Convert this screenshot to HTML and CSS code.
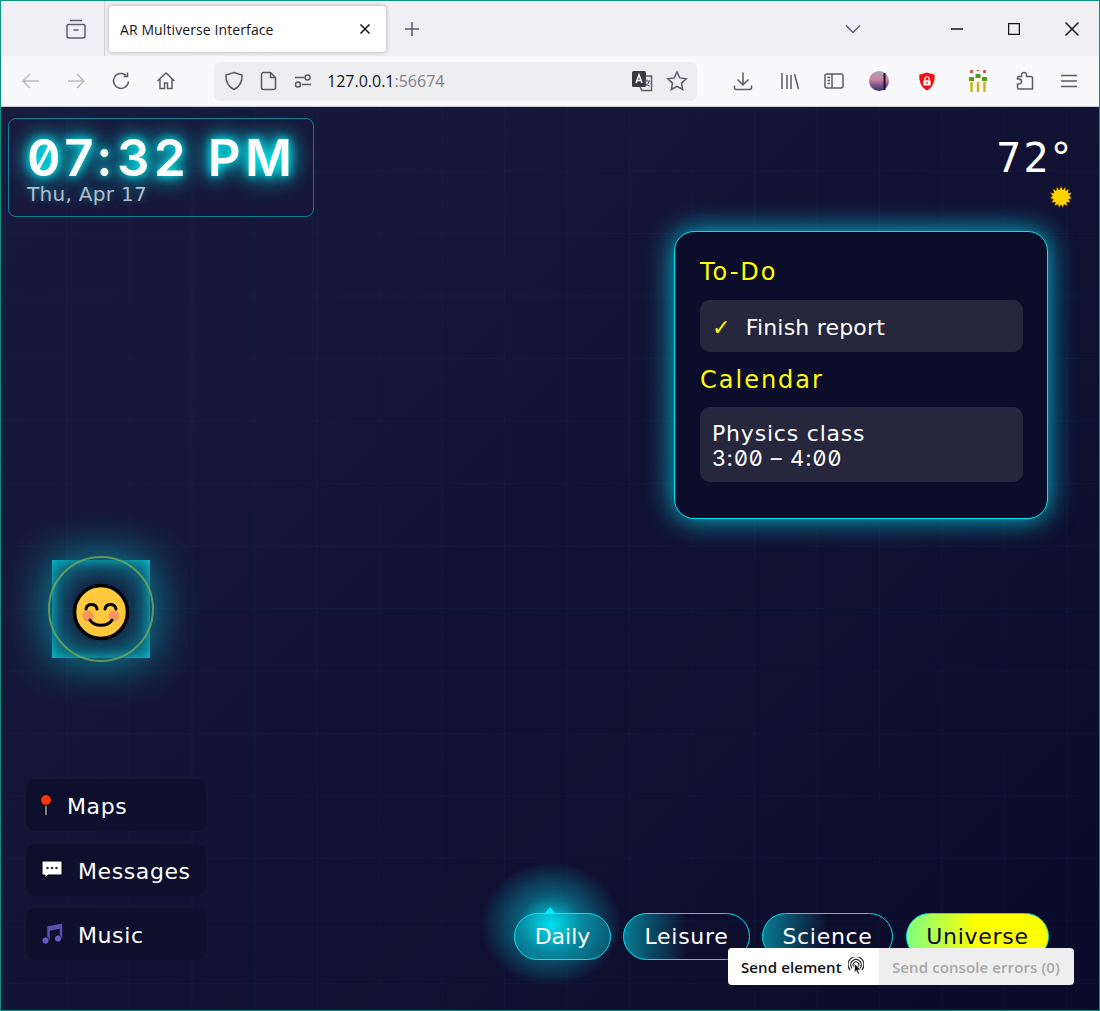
FILE: index.html
```html
<!DOCTYPE html>
<html lang="en">
<head>
    <meta charset="UTF-8">
    <title>AR Multiverse Interface</title>
    <link rel="stylesheet" href="styles.css">
</head>
<body>
<div class="window">
    <div class="tabbar">
        <div class="tab-left">
            <svg class="ico" width="22" height="22" viewBox="0 0 22 22"><path d="M5 2.500h12M3.500 6.500h15a1.500 1.500 0 0 1 1.500 1.500v10a2 2 0 0 1-2 2h-14a2 2 0 0 1-2-2v-10a1.500 1.500 0 0 1 1.500-1.500zM8.500 12h5"/></svg>
        </div>
        <div class="tab">
            <span>AR Multiverse Interface</span>
            <svg class="ico dark" width="12" height="12" viewBox="0 0 12 12"><path d="M1.500 1.500l9 9M10.500 1.500l-9 9"/></svg>
        </div>
        <svg class="ico plus" width="16" height="16" viewBox="0 0 16 16"><path d="M8 1v14M1 8h14"/></svg>
        <svg class="ico chevron" width="16" height="10" viewBox="0 0 16 10"><path d="M1 1.500l7 7 7-7"/></svg>
        <div class="winbtns">
            <svg class="ico dark" width="12" height="12" viewBox="0 0 12 12"><path d="M0 6h12"/></svg>
            <svg class="ico dark" width="12" height="12" viewBox="0 0 12 12"><path d="M.5.500h11v11h-11z"/></svg>
            <svg class="ico dark" width="14" height="14" viewBox="0 0 14 14"><path d="M.5.500l13 13M13.500.500l-13 13"/></svg>
        </div>
    </div>

    <div class="toolbar">
        <div class="nav">
            <svg class="ico faded" width="20" height="20" viewBox="0 0 20 20"><path d="M18 10H2M9 3l-7 7 7 7"/></svg>
            <svg class="ico faded" width="20" height="20" viewBox="0 0 20 20"><path d="M2 10h16M11 3l7 7-7 7"/></svg>
            <svg class="ico" width="20" height="20" viewBox="0 0 20 20"><path d="M17.500 10.500a7.500 7.500 0 1 1-2.500-6.200M16.500 1.500v4h-4"/></svg>
            <svg class="ico" width="20" height="20" viewBox="0 0 20 20"><path d="M1.500 10L10 2l8.500 8M4 8v9.500h4.500V12h3v5.500H16V8"/></svg>
        </div>
        <div class="urlbar">
            <svg class="ico" width="20" height="20" viewBox="0 0 20 20"><path d="M10 1.500l8 2.500c.4 6.500-2 11.500-8 14.500C4 15.500 1.600 10.500 2 4z"/></svg>
            <svg class="ico" width="18" height="20" viewBox="0 0 18 20"><path d="M3.500 1.500h7l5 5v10a2 2 0 0 1-2 2h-10a2 2 0 0 1-2-2v-13a2 2 0 0 1 2-2zM10.500 1.500v5h5"/></svg>
            <svg class="ico" width="18" height="16" viewBox="0 0 18 16"><circle cx="13.500" cy="4.500" r="2.500"/><circle cx="4" cy="11.500" r="2.500"/><path d="M1 4.500h9M8 11.500h9"/></svg>
            <div class="url">127.0.0.1<span>:56674</span></div>
            <svg class="translate" width="22" height="22" viewBox="0 0 22 22"><rect x="1" y="1" width="14" height="16" rx="1.500" fill="#3a3a44"/><path d="M5 13l3-8 3 8M6 10.500h4" fill="none" stroke="#fff" stroke-width="1.500"/><path d="M15 6h5.500v14.500H11L9 17" fill="none" stroke="#5b5b66" stroke-width="1.500"/><path d="M13 11h6M16 9.500v1.500M18 11c-.5 3-2.500 4.500-4.500 5M14 12c.8 2 2.500 3.500 4.500 4" fill="none" stroke="#5b5b66"/></svg>
            <svg class="ico" width="22" height="22" viewBox="0 0 22 22"><path d="M11 2l2.800 5.900 6.400.8-4.700 4.400 1.200 6.400L11 16.400l-5.700 3.100 1.200-6.400-4.700-4.400 6.400-.8z"/></svg>
        </div>
        <div class="actions">
            <svg class="ico" width="20" height="20" viewBox="0 0 20 20"><path d="M10 1.500v12M4.500 8.500l5.500 5.500 5.500-5.500M1.500 14.500v2a2 2 0 0 0 2 2h13a2 2 0 0 0 2-2v-2"/></svg>
            <svg class="ico" width="20" height="20" viewBox="0 0 20 20"><path d="M2 2v16M7 4v14M11 4v14M14.500 3l4 15"/></svg>
            <svg class="ico" width="20" height="18" viewBox="0 0 20 18"><rect x="1" y="2" width="18" height="14" rx="2"/><path d="M8 2v14M3.500 5.500h2.500M3.500 8.500h2.500M3.500 11.500h2.500"/></svg>
            <svg width="20" height="20" viewBox="0 0 20 20"><defs><linearGradient id="dusk" x1="0" y1="0" x2="0" y2="1"><stop offset="0" stop-color="#a9a3b4"/><stop offset=".45" stop-color="#d07f9c"/><stop offset=".7" stop-color="#7a5592"/><stop offset="1" stop-color="#3a3560"/></linearGradient></defs><circle cx="10" cy="10" r="10" fill="url(#dusk)"/><path d="M15.500 2v17" stroke="#17131f" stroke-width="2"/></svg>
            <svg width="18" height="21" viewBox="0 0 20 22"><path d="M10 1l8.500 2.500C19 11 16.500 17.500 10 21 3.500 17.500 1 11 1.500 3.500z" fill="#ee0f0f"/><rect x="6" y="9.500" width="8" height="6" rx="1" fill="#fff"/><path d="M7.700 9.500V8a2.300 2.300 0 0 1 4.600 0v1.500" fill="none" stroke="#fff" stroke-width="1.300"/><circle cx="10" cy="12.500" r="1" fill="#ee0f0f"/></svg>
            <svg width="18" height="22" viewBox="0 0 18 22"><path d="M2.500 12v10M9 12v10M15.500 12v10" stroke="#d2b21c" stroke-width="2.500"/><path d="M2.500 0v3M9 0v1M15.500 0v3" stroke="#d9382a" stroke-width="2.500"/><path d="M0 7h5v4H0zM6.500 4h5v4h-5zM13 7h5v4h-5z" fill="#4f9e0f"/></svg>
            <svg class="ico" width="20" height="20" viewBox="0 0 20 20"><path d="M8 1.500a2.500 2.500 0 0 1 2.500 2.500v1.500H15a1.500 1.500 0 0 1 1.500 1.500v11H3a1.500 1.500 0 0 1-1.500-1.500v-3.500H3a2.500 2.500 0 0 0 0-5H1.500V7A1.500 1.500 0 0 1 3 5.500h2.500V4A2.500 2.500 0 0 1 8 1.500z"/></svg>
            <svg class="ico" width="16" height="14" viewBox="0 0 16 14"><path d="M0 1.500h16M0 7h16M0 12.500h16"/></svg>
        </div>
    </div>

    <div class="hud">
        <div class="col-left">
            <div class="clock">
                <div class="time">07:32 PM</div>
                <div class="date">Thu, Apr 17</div>
            </div>
            <div class="avatar">
                <div class="ring"></div>
                <svg class="face" width="58" height="58" viewBox="0 0 58 58">
                    <circle cx="29" cy="29" r="26.500" fill="#ffc83d" stroke="#000" stroke-width="3.500"/>
                    <circle cx="16" cy="33" r="5.500" fill="#f7965c"/>
                    <circle cx="42" cy="33" r="5.500" fill="#f7965c"/>
                    <path d="M14 26c1-6 10-6 11 0M33 26c1-6 10-6 11 0M18 37c4 7 18 7 22 0" fill="none" stroke="#000" stroke-width="3" stroke-linecap="round"/>
                </svg>
            </div>
            <div class="apps">
                <div class="app">
                    <svg width="16" height="24" viewBox="0 0 16 24"><path d="M8 12v10" stroke="#000" stroke-width="4"/><path d="M8 12v10" stroke="#9bb7c4" stroke-width="1.500"/><circle cx="8" cy="7" r="5.500" fill="#f4350f" stroke="#000"/></svg>
                    <span>Maps</span>
                </div>
                <div class="app app-wide">
                    <svg width="22" height="20" viewBox="0 0 22 20"><path d="M2 1h18a1 1 0 0 1 1 1v12a1 1 0 0 1-1 1H7l-3 3v-3H2a1 1 0 0 1-1-1V2a1 1 0 0 1 1-1z" fill="#fff" stroke="#000"/><circle cx="6.500" cy="8" r="1.300" fill="#333"/><circle cx="11" cy="8" r="1.300" fill="#333"/><circle cx="15.500" cy="8" r="1.300" fill="#333"/></svg>
                    <span>Messages</span>
                </div>
                <div class="app app-wide">
                    <svg width="22" height="22" viewBox="0 0 22 22"><path d="M7.500 17V4.500L20 2v13" fill="none" stroke="#5f4fb3" stroke-width="2.500"/><path d="M7.500 4.500L20 2v3.500L7.500 8z" fill="#5f4fb3"/><circle cx="4.500" cy="17.500" r="3.500" fill="#6a58c4" stroke="#000" stroke-width=".6"/><circle cx="17" cy="15.500" r="3.500" fill="#6a58c4" stroke="#000" stroke-width=".6"/></svg>
                    <span>Music</span>
                </div>
            </div>
        </div>

        <div class="col-right">
            <div class="weather">
                <div class="temp">72°</div>
                <svg class="sun" width="22" height="22" viewBox="-11 -11 22 22"><polygon points="0,-11 1.900,-7.100 4.200,-10.200 4.900,-6.400 8.200,-8.200 7.100,-4 11,-4.200 8.600,-1.200 10.900,1.500 7.700,2.300 9.500,5.500 5.700,5.300 6.400,9 3,7.500 2,10.800 0,7.800 -2,10.800 -3,7.500 -6.400,9 -5.700,5.300 -9.500,5.500 -7.700,2.300 -10.900,1.500 -8.600,-1.200 -11,-4.200 -7.100,-4 -8.200,-8.200 -4.900,-6.400 -4.200,-10.200 -1.900,-7.100" fill="#ffd400" stroke="#4a2c00" stroke-width=".7"/></svg>
            </div>
            <div class="panel">
                <h2>To-Do</h2>
                <div class="item item-todo"><span class="check">✓</span>Finish report</div>
                <h2>Calendar</h2>
                <div class="item item-cal">Physics class<br><span class="zeros">3:00 – 4:00</span></div>
            </div>
            <div class="pills">
                <div class="pill pill-active">Daily</div>
                <div class="pill pill-leisure">Leisure</div>
                <div class="pill pill-science">Science</div>
                <div class="pill pill-universe">Universe</div>
            </div>
        </div>

        <div class="sendbar">
            <div class="send-on">Send element
                <svg width="16" height="19" viewBox="0 0 18 20"><path d="M4.500 12a6 6 0 1 1 9 0M2.500 14a9 9 0 1 1 13 0M6.500 10a3.200 3.200 0 1 1 5 0" fill="none" stroke="#222" stroke-width="1.300"/><path d="M7.500 7l6.500 6.500-3 .3 1.800 4-1.600.7-1.800-4-2 2z" fill="#111" stroke="#fff" stroke-width=".5"/></svg>
            </div>
            <div class="send-off">Send console errors (0)</div>
        </div>
    </div>
</div>
</body>
</html>
```

FILE: styles.css
```css
* {
    box-sizing: border-box;
}
html, body {
    margin: 0;
    padding: 0;
}
.window {
    width: 1100px;
    height: 1011px;
    border: 1px solid #0a8f80;
    display: flex;
    flex-direction: column;
    overflow: hidden;
    font-family: "Open Sans", sans-serif;
}
.ico {
    fill: none;
    stroke: #5b5b66;
    stroke-width: 1.500;
    flex: none;
}
.ico.dark {
    stroke: #15141a;
}
.ico.faded {
    stroke: #b9b9bf;
}

/* browser chrome */
.tabbar {
    height: 55px;
    background: #f0f0f4;
    display: flex;
    align-items: center;
    flex: none;
}
.tab-left {
    width: 104px;
    height: 55px;
    border-right: 1px solid #cfcfd6;
    display: flex;
    align-items: center;
    justify-content: flex-end;
    padding-right: 17px;
    margin-right: 4px;
}
.tab {
    width: 277px;
    height: 46px;
    margin-top: 1px;
    background: #fff;
    border-radius: 4px;
    box-shadow: 0 0 4px rgba(0, 0, 0, 0.3);
    display: flex;
    align-items: center;
    justify-content: space-between;
    padding: 0 15px 0 11px;
    font-size: 14px;
    letter-spacing: 0.1px;
    color: #15141a;
}
.plus {
    margin-left: 18px;
}
.chevron {
    margin-left: 425px;
}
.winbtns {
    display: flex;
    align-items: center;
    gap: 45px;
    margin-left: 90px;
}
.toolbar {
    height: 51px;
    background: #f9f9fb;
    border-bottom: 1px solid #ccccd2;
    display: flex;
    align-items: center;
    flex: none;
}
.nav {
    display: flex;
    align-items: center;
    gap: 25px;
    width: 213px;
    padding-left: 20px;
}
.urlbar {
    width: 483px;
    height: 39px;
    background: #eeeef0;
    border-radius: 6px;
    display: flex;
    align-items: center;
    gap: 16px;
    padding: 0 9px 0 10px;
}
.url {
    font-size: 16px;
    color: #15141a;
    margin-left: -1px;
    flex: 1;
}
.url span {
    color: #80808a;
}
.translate {
    flex: none;
    margin-right: -3px;
}
.actions {
    display: grid;
    grid-template-columns: 47px 47px 41px 49px 47px 55px 41px 45px;
    justify-items: center;
    align-items: center;
    margin-left: 22px;
}

/* hud */
.hud {
    flex: 1;
    position: relative;
    display: flex;
    justify-content: space-between;
    background-color: #12123a;
    background-image:
        linear-gradient(rgba(0, 255, 255, 0.025) 1px, transparent 1px),
        linear-gradient(90deg, rgba(0, 255, 255, 0.025) 1px, transparent 1px),
        linear-gradient(135deg, #1a1a3e 0%, #0a0a2a 100%);
    background-size: 62.500px 62.500px, 62.500px 62.500px, 100% 100%;
    background-position: 3px 1px, 3px 1px, 0 0;
    font-family: "DejaVu Sans", sans-serif;
    color: #fff;
}
.col-left {
    padding: 11px 0 50px 7px;
    display: flex;
    flex-direction: column;
}
.clock {
    width: 306px;
    height: 99px;
    border: 1px solid rgba(0, 255, 255, 0.45);
    border-radius: 8px;
    padding: 15px 18px;
}
.time {
    font-family: "Inter", sans-serif;
    font-feature-settings: "zero";
    font-size: 51px;
    line-height: 48px;
    font-weight: 600;
    letter-spacing: 4.500px;
    white-space: nowrap;
    text-shadow: 0 0 10px #00ffff, 0 0 20px #00ffff, 0 0 30px rgba(0, 255, 255, 0.5);
}
.date {
    font-size: 20px;
    line-height: 24px;
    letter-spacing: 0.3px;
    color: #b3bdc9;
    text-shadow: 0 0 8px rgba(0, 255, 255, 0.4);
}
.avatar {
    width: 98px;
    height: 98px;
    margin: 343px 0 0 44px;
    position: relative;
    display: flex;
    align-items: center;
    justify-content: center;
    box-shadow: 0 0 50px rgba(0, 255, 255, 0.6), inset 0 0 40px rgba(0, 255, 255, 0.7), inset 0 0 12px rgba(0, 255, 255, 0.5);
}
.ring {
    position: absolute;
    left: -4px;
    top: -4px;
    width: 106px;
    height: 106px;
    border: 2px solid rgba(125, 170, 85, 0.75);
    border-radius: 50%;
}
.face {
    margin-top: 6px;
}
.apps {
    margin: 121px 0 0 18px;
    display: flex;
    flex-direction: column;
    gap: 12.500px;
}
.app {
    width: 180px;
    height: 52px;
    background: #0e0e2d;
    border-radius: 10px;
    display: flex;
    align-items: center;
    gap: 13px;
    padding-left: 12px;
    font-size: 22px;
    letter-spacing: 0.6px;
}
.app span {
    padding-top: 3px;
}
.app-wide {
    gap: 15px;
    padding-left: 15px;
}
.col-right {
    width: 430px;
    padding: 0 51px 50px 0;
    display: flex;
    flex-direction: column;
    align-items: flex-end;
}
.weather {
    margin: 28px -25px 0 0;
    display: flex;
    flex-direction: column;
    align-items: flex-end;
}
.temp {
    font-size: 40px;
    line-height: 44px;
    letter-spacing: 2px;
    padding-top: 1px;
}
.sun {
    margin: 6px 1px 0 0;
}
.panel {
    width: 374px;
    height: 288px;
    margin-top: 23px;
    background: #0c0c2b;
    border: 1px solid #00e5f0;
    border-radius: 20px;
    box-shadow: 0 0 28px rgba(0, 240, 255, 0.8);
    padding: 25px 24px 25px 25px;
}
.panel h2 {
    margin: 0;
    font-size: 24px;
    line-height: 30px;
    font-weight: normal;
    letter-spacing: 2px;
    color: #ffff00;
}
.item {
    background: #26263c;
    border-radius: 10px;
    padding: 0 12px;
    font-size: 22px;
    color: #fff;
    margin: 13px 0 13px;
}
.item-todo {
    height: 52px;
    display: flex;
    align-items: center;
    gap: 15px;
    padding-top: 3px;
    letter-spacing: 0.2px;
}
.check {
    color: #ffff00;
}
.item-cal {
    height: 75px;
    padding-top: 14px;
    line-height: 25px;
    margin-top: 12px;
    letter-spacing: 0.8px;
}
.zeros {
    font-family: "Inter", sans-serif;
    font-feature-settings: "zero";
    letter-spacing: 1px;
}
.pills {
    display: flex;
    gap: 12px;
    margin: auto -1px 0 -40px;
}
.pill {
    height: 47px;
    border: 1px solid #00e5f0;
    border-radius: 24px;
    display: flex;
    align-items: center;
    justify-content: center;
    font-size: 22px;
    letter-spacing: 0.7px;
    background: linear-gradient(90deg, rgba(0, 229, 240, 0.5), transparent 50%);
}
.pill-active {
    width: 97px;
    position: relative;
    z-index: 0;
    letter-spacing: 0;
    background: rgba(0, 229, 240, 0.3);
}
.pill-active::before {
    content: "";
    position: absolute;
    z-index: -1;
    left: -34px;
    top: -52px;
    width: 140px;
    height: 125px;
    background: radial-gradient(closest-side, rgba(0, 240, 255, 0.9), rgba(0, 240, 255, 0.35) 45%, transparent);
}
.pill-active::after {
    content: "";
    position: absolute;
    left: 29px;
    top: -7px;
    border: 6px solid transparent;
    border-top: 0;
    border-bottom: 7px solid #00f0ff;
}
.pill-leisure {
    width: 127px;
}
.pill-science {
    width: 131px;
}
.pill-universe {
    width: 143px;
    margin-left: 1px;
    color: #0a0a2a;
    background: linear-gradient(90deg, #80ff80, #ffff00 50%);
}
.sendbar {
    position: absolute;
    left: 727px;
    top: 841px;
    width: 346px;
    height: 37px;
    border-radius: 4px;
    overflow: hidden;
    display: flex;
    font-family: "Open Sans", sans-serif;
    font-size: 15px;
    font-weight: 600;
    letter-spacing: 0.1px;
}
.send-on {
    width: 151px;
    background: #fff;
    color: #111;
    display: flex;
    align-items: center;
    gap: 6px;
    padding-left: 13px;
}
.send-off {
    flex: 1;
    background: #eeeeee;
    color: #a8a8a8;
    display: flex;
    align-items: center;
    padding-left: 13px;
}
```
